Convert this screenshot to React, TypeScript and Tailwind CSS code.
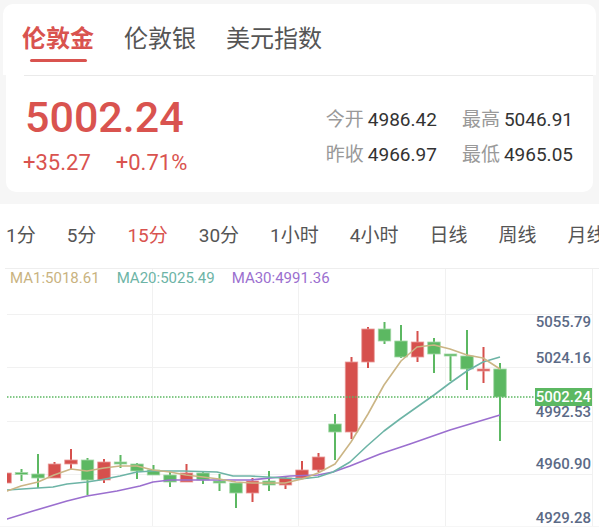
import React from "react";

type C = [number, "r" | "g", number, number, number, number];

const candles: C[] = [
  [5, "r", 474, 484, 472, 486],
  [21.5, "g", 473.5, 475.5, 470, 482],
  [38, "g", 475, 479, 455, 489],
  [54.5, "r", 465, 479, 463, 479],
  [71, "r", 461, 465, 450, 471],
  [87.5, "g", 461, 481, 459, 496],
  [104, "r", 463, 481, 460, 484],
  [120.5, "g", 463, 465, 456, 469],
  [137, "g", 465, 472, 464, 480],
  [153.5, "g", 471, 476, 466, 476],
  [170, "g", 476, 483, 473, 488],
  [186.5, "r", 474, 483, 465, 483],
  [203, "g", 474, 481, 472, 485],
  [219.5, "g", 482, 483.5, 475, 492],
  [236, "g", 484, 494, 484, 509],
  [252.5, "r", 482, 494, 479, 503],
  [269, "g", 482, 486, 472, 492],
  [285.5, "r", 479, 486, 478, 490],
  [302, "r", 471, 479, 462, 479],
  [318.5, "r", 458, 471, 454, 473],
  [335, "g", 425, 433, 415, 461],
  [351.5, "r", 363, 433, 358, 440],
  [368, "r", 330, 363, 328, 369],
  [384.5, "g", 330, 342, 323, 345],
  [401, "g", 342, 358, 326, 359],
  [417.5, "r", 343, 358, 332, 363],
  [434, "g", 343, 355, 339, 374],
  [450.5, "g", 355, 357, 355, 382],
  [467, "g", 357, 370, 331, 391],
  [483.5, "r", 370, 372, 348, 384],
  [500, "g", 370, 398, 364, 442],
];

const ma1: [number, number][] = [
  [0, 494], [7, 492], [21, 487], [38, 483], [54, 476], [71, 470], [87, 472], [104, 469],
  [120, 467], [137, 467], [153, 471], [170, 473], [186, 476], [203, 478], [219, 480],
  [236, 483], [252, 484], [269, 484], [285, 484], [302, 480], [318, 474], [335, 465],
  [351, 443], [368, 415], [384, 386], [401, 362], [417, 348], [434, 346], [450, 350],
  [467, 356], [483, 359], [500, 370],
];
const ma20: [number, number][] = [
  [0, 492], [7, 491], [53, 488], [67, 485], [87, 483], [100, 481], [120, 477], [137, 473],
  [153, 472], [183, 472], [217, 473], [233, 477], [250, 477], [267, 478], [300, 480],
  [318, 478], [333, 473], [350, 463], [367, 447], [384, 432], [400, 420], [417, 408],
  [434, 396], [450, 384], [467, 372], [483, 363], [500, 358],
];
const ma30: [number, number][] = [
  [0, 522], [7, 520], [33, 512], [67, 502], [87, 497], [117, 492], [140, 487], [153, 483],
  [170, 481], [200, 481], [250, 481], [290, 477], [318, 476], [333, 473], [350, 467],
  [380, 455], [410, 445], [450, 431], [500, 416],
];

const pts = (a: [number, number][]) => a.map((p) => p.join(",")).join(" ");

const RED = "#d6504d";
const GREEN = "#5cb862";

function Chart() {
  const axis: [string, number][] = [
    ["5055.79", 323],
    ["5024.16", 359],
    ["4992.53", 413],
    ["4960.90", 465],
    ["4929.28", 519],
  ];
  return (
    <svg
      className="absolute left-0 top-0"
      width="599"
      height="258"
      viewBox="0 269 599 258"
    >
      <defs>
        <clipPath id="plot">
          <rect x="7" y="269" width="585" height="260" />
        </clipPath>
      </defs>
      <line x1="5" y1="269.5" x2="599" y2="269.5" stroke="#eeeeee" strokeWidth="1" />
      {[315, 368, 422, 475].map((y) => (
        <line key={y} x1="7" y1={y + 0.5} x2="592" y2={y + 0.5} stroke="#f1f1f1" strokeWidth="1" />
      ))}
      {[152, 298, 445, 592].map((x) => (
        <line key={x} x1={x + 0.5} y1="270" x2={x + 0.5} y2="527" stroke="#f1f1f1" strokeWidth="1" />
      ))}
      <g clipPath="url(#plot)">
        {candles.map(([x, c, bt, bb, wt, wb], i) => {
          const col = c === "r" ? RED : GREEN;
          const edge = c === "r" ? "#e89a98" : "#a3d8a7";
          const h = Math.max(bb - bt, 2);
          return (
            <g key={i}>
              <rect x={x - 1} y={wt} width="2" height={wb - wt} fill={col} />
              <rect x={x - 6.25} y={bt} width="12.5" height={h} fill={col} stroke={edge} strokeWidth="0.8" />
            </g>
          );
        })}
        <polyline points={pts(ma30)} fill="none" stroke="#9b6fcf" strokeWidth="1.6" strokeLinejoin="round" />
        <polyline points={pts(ma20)} fill="none" stroke="#6db4a6" strokeWidth="1.6" strokeLinejoin="round" />
        <polyline points={pts(ma1)} fill="none" stroke="#cbb585" strokeWidth="1.6" strokeLinejoin="round" />
      </g>
      <line x1="7" y1="398" x2="535" y2="398" stroke={GREEN} strokeWidth="1.5" strokeDasharray="1.5 1.5" />
      {axis.map(([t, y]) => (
        <text
          key={t}
          x="591"
          y={y + 5.3}
          textAnchor="end"
          fontFamily="Roboto, sans-serif"
          fontSize="15"
          fontWeight="500"
          fill="#5b6a86"
        >
          {t}
        </text>
      ))}
      <rect x="535" y="389" width="57" height="18" fill={GREEN} />
      <text
        x="591"
        y="403.3"
        textAnchor="end"
        fontFamily="Roboto, sans-serif"
        fontSize="15"
        fontWeight="500"
        fill="#ffffff"
      >
        5002.24
      </text>
    </svg>
  );
}

export default function App() {
  const periods = ["1分", "5分", "15分", "30分", "1小时", "4小时", "日线", "周线", "月线"];
  return (
    <div className="w-[599px] h-[527px] overflow-hidden bg-[#f6f6f6] font-['Roboto','Noto_Sans_CJK_SC',sans-serif]">
      <div className="pt-[4px]">
        {/* tabs card */}
        <div className="mx-[3px] h-[71px] rounded-t-[10px] bg-white flex items-start gap-[30px] pl-[19px] pt-[19px]">
          <div className="flex flex-col items-center">
            <span className="text-[24px] leading-[32px] font-bold text-[#d9534f]">伦敦金</span>
            <span className="mt-[4px] block w-[57px] h-[3px] rounded-full bg-[#d9534f]" />
          </div>
          <span className="text-[24px] leading-[32px] text-[#555555]">伦敦银</span>
          <span className="text-[24px] leading-[32px] text-[#555555]">美元指数</span>
        </div>
        {/* price card */}
        <div className="mx-[6px] h-[117px] rounded-b-[10px] bg-white">
          <div className="ml-[18px] h-px bg-[#eaeaea]" />
          <div className="flex justify-between pl-[19px] pr-[20px]">
            <div className="flex flex-col pt-[20px]">
              <span className="text-[43px] leading-[43px] font-medium text-[#d9534f]">5002.24</span>
              <div className="mt-[11px] -ml-[2px] flex gap-[25px] text-[22px] leading-[26px] text-[#d9534f]">
                <span>+35.27</span>
                <span>+0.71%</span>
              </div>
            </div>
            <div className="pt-[31px] grid grid-cols-[auto_auto] gap-x-[25px] text-[19px] leading-[26px]">
              <div className="flex gap-[4px]">
                <span className="text-[#999999]">今开</span>
                <span className="text-[#333333]">4986.42</span>
              </div>
              <div className="flex gap-[4px]">
                <span className="text-[#999999]">最高</span>
                <span className="text-[#333333]">5046.91</span>
              </div>
              <div className="flex gap-[4px]">
                <span className="text-[#999999]">昨收</span>
                <span className="text-[#333333]">4966.97</span>
              </div>
              <div className="flex gap-[4px]">
                <span className="text-[#999999]">最低</span>
                <span className="text-[#333333]">4965.05</span>
              </div>
            </div>
          </div>
        </div>
      </div>
      {/* period + chart */}
      <div className="mt-[12px] bg-white">
        <div className="h-[64px] flex items-center gap-[31px] pl-[6px] whitespace-nowrap overflow-hidden">
          {periods.map((p) => (
            <span
              key={p}
              className={
                p === "15分"
                  ? "shrink-0 text-[19px] leading-[26px] text-[#d9534f]"
                  : "shrink-0 text-[19px] leading-[26px] text-[#555555]"
              }
            >
              {p}
            </span>
          ))}
        </div>
        <div className="relative h-[258px]">
          <Chart />
          <div className="relative flex gap-[17px] pl-[10px] pt-[1px] text-[15px] leading-[18px]">
            <span className="text-[#c9b37f]">MA1:5018.61</span>
            <span className="text-[#6db4a6]">MA20:5025.49</span>
            <span className="text-[#9b6fcf]">MA30:4991.36</span>
          </div>
        </div>
      </div>
    </div>
  );
}
